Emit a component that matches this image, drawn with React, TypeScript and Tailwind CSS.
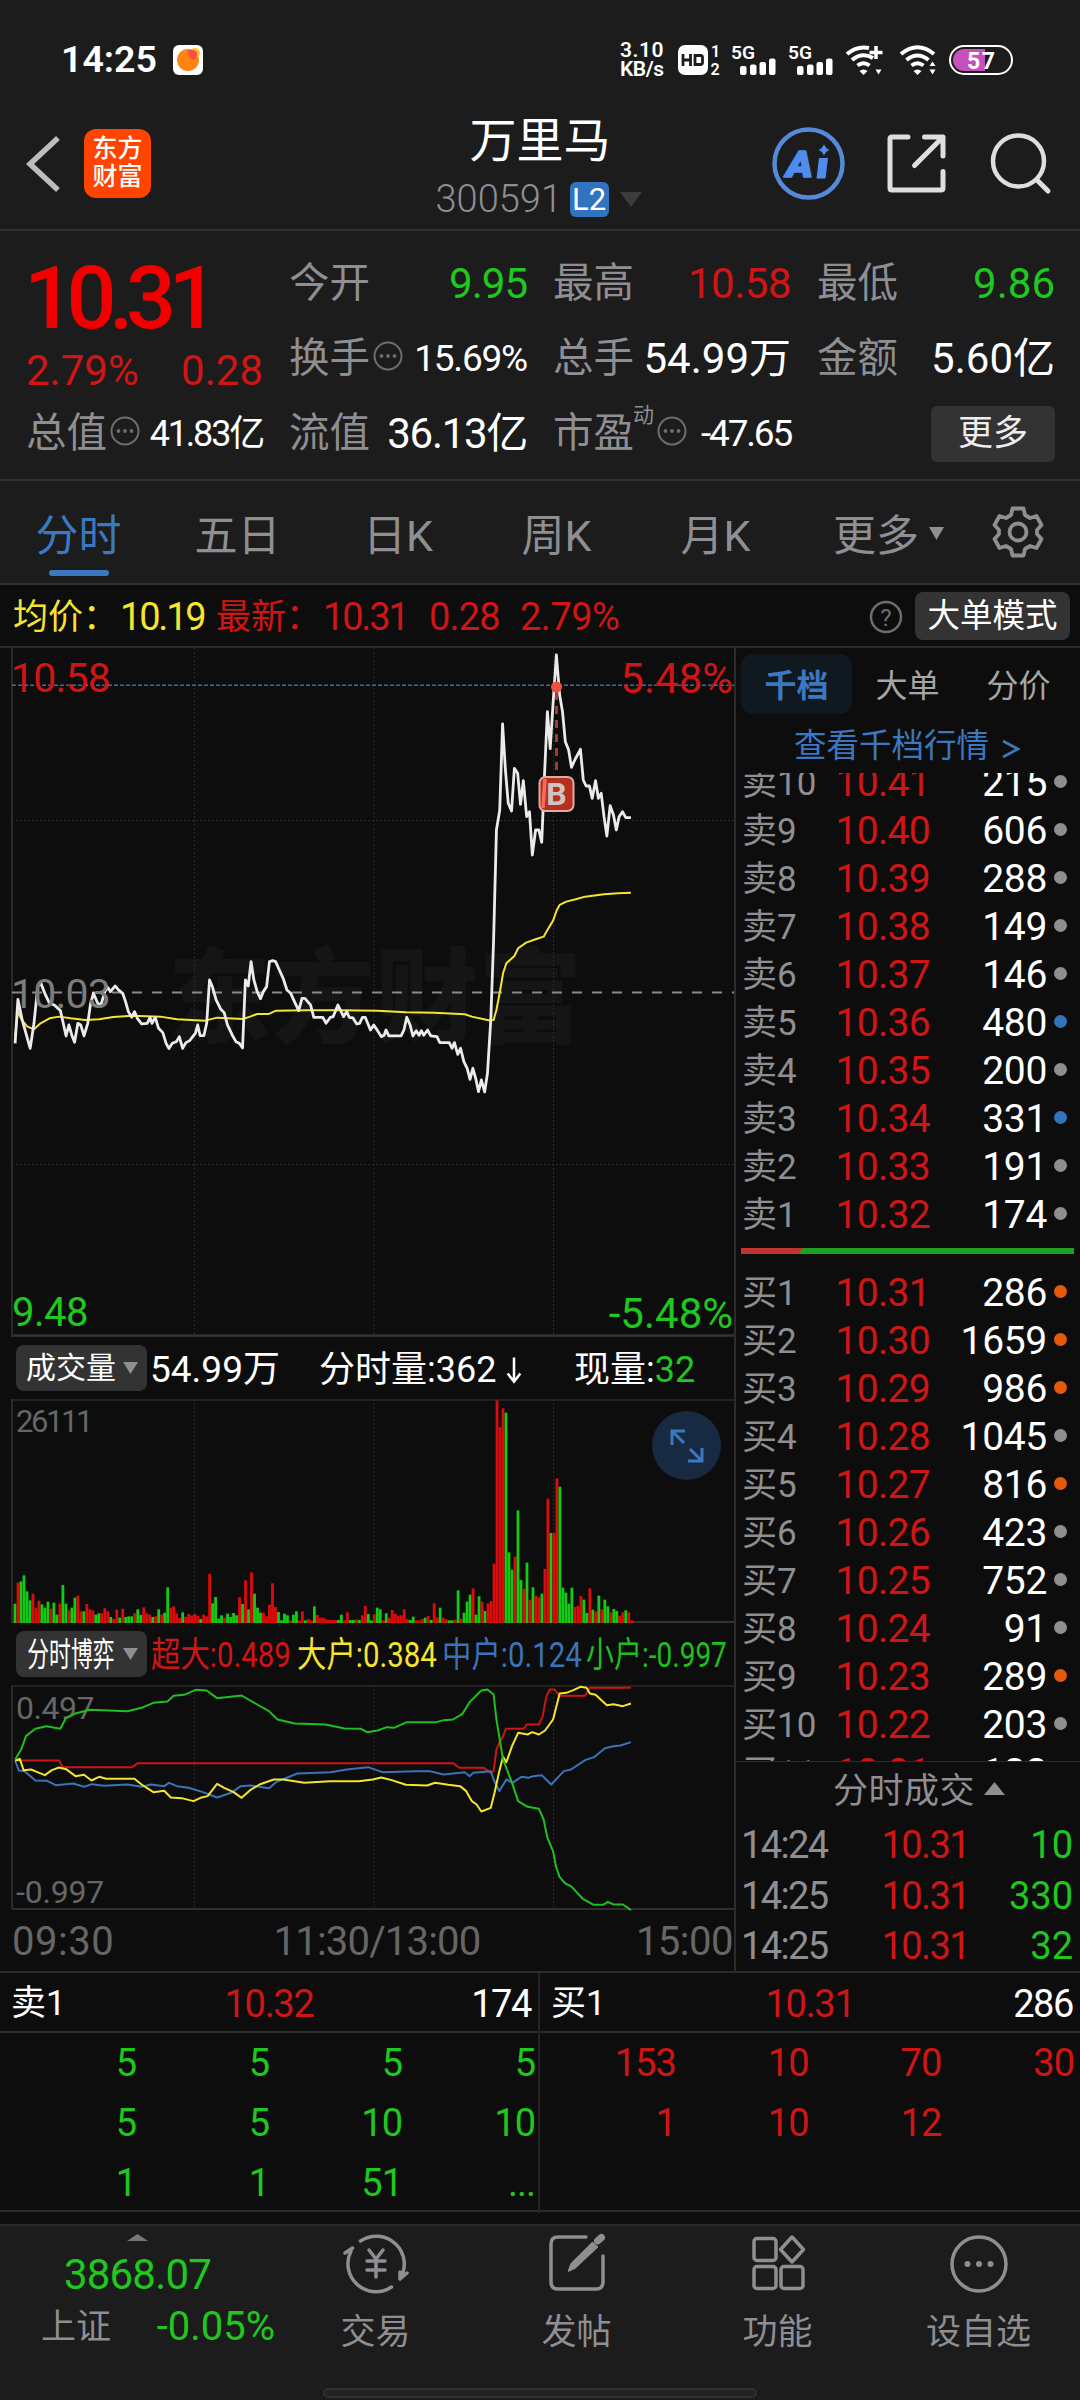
import type { ReactNode } from 'react'
import clsx from 'clsx'

type Level = { label: string; price: string; vol: string; dot: 'gray' | 'blue' | 'orange' }

const SELLS: Level[] = [
  { label: '卖10', price: '10.41', vol: '215', dot: 'gray' },
  { label: '卖9', price: '10.40', vol: '606', dot: 'gray' },
  { label: '卖8', price: '10.39', vol: '288', dot: 'gray' },
  { label: '卖7', price: '10.38', vol: '149', dot: 'gray' },
  { label: '卖6', price: '10.37', vol: '146', dot: 'gray' },
  { label: '卖5', price: '10.36', vol: '480', dot: 'blue' },
  { label: '卖4', price: '10.35', vol: '200', dot: 'gray' },
  { label: '卖3', price: '10.34', vol: '331', dot: 'blue' },
  { label: '卖2', price: '10.33', vol: '191', dot: 'gray' },
  { label: '卖1', price: '10.32', vol: '174', dot: 'gray' },
]

const BUYS: Level[] = [
  { label: '买1', price: '10.31', vol: '286', dot: 'orange' },
  { label: '买2', price: '10.30', vol: '1659', dot: 'orange' },
  { label: '买3', price: '10.29', vol: '986', dot: 'orange' },
  { label: '买4', price: '10.28', vol: '1045', dot: 'gray' },
  { label: '买5', price: '10.27', vol: '816', dot: 'orange' },
  { label: '买6', price: '10.26', vol: '423', dot: 'gray' },
  { label: '买7', price: '10.25', vol: '752', dot: 'gray' },
  { label: '买8', price: '10.24', vol: '91', dot: 'gray' },
  { label: '买9', price: '10.23', vol: '289', dot: 'orange' },
  { label: '买10', price: '10.22', vol: '203', dot: 'gray' },
  { label: '买11', price: '10.21', vol: '132', dot: 'gray' },
]

const TRADES = [
  { time: '14:24', price: '10.31', vol: '10' },
  { time: '14:25', price: '10.31', vol: '330' },
  { time: '14:25', price: '10.31', vol: '32' },
]

const SELL_QUEUE = ['5', '5', '5', '5', '5', '5', '10', '10', '1', '1', '51', '...']
const BUY_QUEUE = ['153', '10', '70', '30', '1', '10', '12']

// price and average lines, x 0-1568, y 0-2088
const PRICE_LINE =
  '32,1210 38,1078 47,1140 55,1180 64,1225 72,1150 80,1040 86,1028 95,1060 105,1090 115,1095 128,1112 134,1150 140,1188 146,1155 152,1185 158,1207 165,1150 171,1155 178,1188 186,1150 192,1090 198,1060 207,1090 214,1095 222,1055 228,1042 234,1055 244,1038 251,1050 260,1060 266,1085 272,1115 279,1132 285,1115 291,1135 300,1152 312,1150 318,1132 322,1150 329,1132 336,1165 345,1178 352,1210 358,1226 365,1210 374,1205 380,1190 387,1225 394,1208 402,1202 410,1187 414,1180 419,1155 424,1187 432,1187 438,1150 444,1020 450,1040 458,1080 468,1108 475,1118 482,1155 492,1185 500,1205 507,1210 514,1224 520,1020 526,1038 532,965 538,1020 545,1055 552,1076 558,1055 565,1040 571,965 578,962 584,965 592,990 600,1015 608,1050 616,1060 624,1085 633,1112 640,1075 646,1075 658,1095 665,1132 684,1132 691,1150 700,1132 706,1130 716,1095 722,1112 728,1130 735,1115 740,1132 748,1134 756,1152 762,1150 768,1132 774,1132 785,1170 792,1155 800,1172 808,1190 814,1186 818,1170 824,1188 850,1188 856,1170 862,1132 869,1155 875,1188 882,1172 888,1186 893,1172 898,1186 906,1170 913,1188 926,1190 932,1208 952,1208 958,1225 963,1208 970,1243 976,1225 983,1265 990,1285 996,1318 1002,1285 1008,1315 1014,1355 1020,1320 1027,1356 1033,1300 1040,1140 1046,900 1052,570 1059,510 1065,252 1071,390 1077,490 1084,513 1090,385 1097,400 1103,493 1109,422 1116,530 1122,515 1128,645 1135,570 1142,570 1148,607 1154,400 1160,215 1166,326 1172,190 1179,45 1186,165 1192,215 1198,305 1205,330 1211,382 1218,360 1230,328 1236,420 1242,438 1249,438 1255,475 1262,422 1268,475 1274,460 1280,530 1286,588 1293,497 1300,525 1306,570 1312,530 1319,515 1326,533 1337,533'
const AVG_LINE =
  '32,1190 38,1115 46,1140 58,1160 72,1168 86,1150 105,1135 125,1130 150,1135 180,1140 210,1138 240,1131 280,1127 340,1130 375,1138 435,1142 460,1133 515,1137 530,1130 545,1122 570,1122 585,1112 650,1111 720,1111 800,1112 860,1117 920,1118 985,1123 1000,1130 1035,1141 1046,1140 1052,1110 1060,1050 1066,1000 1073,970 1090,948 1098,925 1115,908 1135,898 1152,890 1160,870 1172,842 1180,810 1186,795 1200,785 1220,778 1240,770 1280,763 1310,760 1337,758'

const GAME_LINES = [
  {
    color: '#cc1414',
    points:
      '32,423 125,423 133,443 280,443 292,431 960,431 973,445 1025,445 1040,460 1046,455 1052,390 1060,365 1066,350 1072,328 1110,328 1116,315 1142,315 1150,290 1158,230 1165,210 1175,210 1186,229 1240,229 1250,205 1337,205',
  },
  {
    color: '#3b73b9',
    points:
      '32,423 40,453 52,455 75,483 100,484 118,497 155,492 178,502 195,494 220,499 270,495 300,502 320,495 348,500 358,490 375,500 400,505 430,518 460,534 490,520 510,500 530,498 555,503 570,506 585,488 630,462 700,458 735,450 780,443 810,458 880,455 910,455 940,465 985,458 995,470 1003,460 1040,455 1046,480 1058,515 1073,480 1086,490 1105,472 1120,475 1130,470 1148,467 1168,495 1195,455 1210,450 1240,422 1260,412 1282,386 1300,380 1315,378 1337,368',
  },
  {
    color: '#f5e531',
    points:
      '32,423 42,418 50,452 66,450 74,455 95,467 110,452 125,444 140,449 160,470 178,466 194,483 210,472 225,478 285,478 300,495 325,518 348,514 362,534 385,536 410,545 425,535 440,530 460,493 475,505 495,518 512,535 530,512 550,495 580,480 600,480 645,490 700,485 760,485 790,480 808,474 830,482 860,496 905,498 922,490 950,496 975,500 988,515 1000,545 1010,555 1020,576 1040,565 1048,520 1058,455 1066,412 1073,428 1085,380 1098,340 1118,345 1128,338 1142,345 1155,333 1172,300 1186,222 1200,220 1215,212 1230,202 1243,205 1250,222 1262,226 1286,257 1300,254 1320,260 1337,252',
  },
  {
    color: '#1fbf1f',
    points:
      '32,420 45,390 55,350 75,328 98,320 128,328 140,295 158,283 190,271 270,275 300,265 325,250 355,246 368,229 390,226 415,211 438,213 460,236 512,228 545,255 570,275 588,300 625,312 690,315 730,327 765,328 778,338 800,333 820,323 835,325 862,308 925,308 940,302 960,300 980,283 995,248 1020,213 1033,210 1046,225 1052,300 1066,420 1085,490 1098,545 1118,562 1142,568 1152,600 1160,655 1172,695 1178,740 1186,773 1198,792 1210,800 1235,838 1258,856 1278,856 1288,847 1300,855 1320,855 1337,872',
  },
]

// one entry per minute: r = up, g = down, number = bar height in thirds of a pixel
const VOLUME =
  'g58 r121 g125 g143 g95 g68 r88 r46 r67 g56 g46 g64 r43 g61 g25 r58 g114 g58 r38 g46 g76 r82 r35 g35 r57 r41 r38 g25 g29 r29 r44 r35 g18 r12 r40 g16 r43 g18 g20 g20 r29 g41 g24 r47 r29 r25 g18 r20 g41 r25 g31 g107 r46 r50 r28 r15 g32 r18 r27 r23 r27 r22 g12 r25 r20 r147 g59 g78 g13 g23 r16 g28 g18 g30 g23 r77 g57 r128 g41 r152 g88 g46 g31 r31 r20 r55 r119 r48 g33 g8 g28 g23 r8 g25 g35 r8 r35 g8 r12 r8 g50 r24 r16 r16 r11 r9 r9 r9 g9 g25 r8 r32 g9 g9 r11 g9 r23 r51 g27 g8 r26 g46 g41 r8 g29 r15 r39 r27 r22 r23 r41 r12 g9 g19 r8 r8 r12 g16 r21 g9 r59 r16 g46 r16 r11 g8 g8 r10 g98 r13 g31 g64 g85 r104 g25 g80 r64 g36 r59 r66 r178 r668 r588 r644 g631 g212 g160 r199 g338 g129 r103 g181 r70 g107 r82 r77 g88 r162 r373 g270 r270 r434 g409 g106 g91 g58 g106 r48 r52 r81 g70 g30 r104 g40 r35 g82 r41 g70 g50 r32 g42 g36 r22 r32 g38 r32 r8'
    .split(' ')
    .map((s) => ({ up: s[0] === 'r', h: Number(s.slice(1)) / 3 }))

const GRID_X = [194.5, 374, 553.5]

function Triangle({ className, up }: { className: string; up?: boolean }) {
  return (
    <svg viewBox="0 0 10 10" preserveAspectRatio="none" className={className} fill="currentColor">
      <path d={up ? 'M0 10L5 0L10 10Z' : 'M0 0H10L5 10Z'} />
    </svg>
  )
}

function InfoDot({ className }: { className?: string }) {
  return (
    <svg viewBox="0 0 30 30" className={clsx('mb-[5px] h-[30px] w-[30px] shrink-0 text-[#6d6d70]', className)}>
      <circle cx="15" cy="15" r="13.5" fill="none" stroke="currentColor" strokeWidth="2" />
      <g fill="currentColor">
        <circle cx="8.5" cy="15" r="1.9" />
        <circle cx="15" cy="15" r="1.9" />
        <circle cx="21.5" cy="15" r="1.9" />
      </g>
    </svg>
  )
}

function Signal() {
  return (
    <svg viewBox="0 0 46 32" className="h-8 w-[46px] overflow-visible text-white" fill="currentColor">
      <text x="0" y="15" fontSize="19" fontWeight="600" textLength="24" lengthAdjust="spacingAndGlyphs">
        5G
      </text>
      <rect x="9" y="22" width="6.5" height="9" rx="2" />
      <rect x="19" y="20.5" width="6.5" height="10.5" rx="2" />
      <rect x="28.5" y="18" width="6.5" height="13" rx="2" />
      <rect x="38" y="14.5" width="6.5" height="16.5" rx="2" />
    </svg>
  )
}

function Wifi({ plus }: { plus?: boolean }) {
  return (
    <svg viewBox="0 0 38 32" className="h-8 w-[38px] text-white" fill="none" stroke="currentColor">
      <path d={plus ? 'M2 10Q12 1.500 24 4' : 'M2 10Q18.500 -3.500 35 10'} strokeWidth="4" />
      <path d={plus ? 'M7 16Q17 7.500 28 14' : 'M7.500 16Q18.500 7 29.500 16'} strokeWidth="4" />
      <path d="M12.500 21.500Q18.500 17 24.500 21.500" strokeWidth="4" />
      <path d="M14.500 27Q18.500 24 22.500 27L18.500 31Z" fill="currentColor" stroke="none" />
      {plus && <path d="M31 2V15M24.500 8.500H37.500" strokeWidth="3.500" />}
      {!plus && <path d="M30.500 22L33.500 17.500L36.500 22Z" fill="currentColor" stroke="none" />}
      <path d="M30.500 25.500H36.500L33.500 30.500Z" fill="currentColor" stroke="none" />
    </svg>
  )
}

function StatusBar() {
  return (
    <div className="flex h-[120px] items-center pl-[61px] pr-[67px] text-white">
      <span className="w-[100px] text-[37.5px] font-semibold leading-none">14:25</span>
      <svg viewBox="0 0 30 30" className="ml-3 h-[30px] w-[30px]">
        <rect width="30" height="30" rx="6" fill="#fff" />
        <circle cx="15" cy="15" r="11" fill="#ff8412" />
        <circle cx="22" cy="8" r="5" fill="#ffc61a" />
        <path d="M15 5q6-1 9 2q1 7-4 8q-5-2-5-10z" fill="#ff4f3a" />
      </svg>
      <div className="ml-auto flex items-center">
        <div className="w-[46px] text-[21px] font-semibold leading-[19px]">
          <div className="tracking-[0.5px]">3.10</div>
          <div className="tracking-[-0.5px]">KB/s</div>
        </div>
        <svg viewBox="0 0 44 32" className="ml-[12px] h-8 w-11 overflow-visible" fill="#fff">
          <rect y="1" width="30" height="30" rx="7" />
          <path d="M5 10V22M5 16H12.500M12.500 10V22M17 11.500H22.500Q24.500 11.500 24.500 13.500V18.500Q24.500 20.500 22.500 20.500H17Z" fill="none" stroke="#1c1c1c" strokeWidth="2.800" />
          <text x="33" y="13" fontSize="16" fontWeight="600">1</text>
          <text x="32.5" y="30.5" fontSize="16" fontWeight="600">2</text>
        </svg>
        <div className="ml-[9px]"><Signal /></div>
        <div className="ml-[11px]"><Signal /></div>
        <div className="ml-[11px]"><Wifi plus /></div>
        <div className="ml-[16px]"><Wifi /></div>
        <svg viewBox="0 0 64 30" className="ml-[12px] h-[30px] w-16">
          <rect x="1" y="1" width="62" height="28" rx="14" fill="#1c1c1c" stroke="#fff" strokeWidth="2" />
          <path d="M36 4V26H15A11 11 0 0 1 15 4Z" fill="#c850bd" />
          <text x="18" y="23.5" fontSize="23" fontWeight="700" fill="#fff" textLength="28">57</text>
        </svg>
      </div>
    </div>
  )
}

function Header() {
  return (
    <div className="grid h-[111px] grid-cols-[320px_1fr_320px] border-b-2 border-[#303030]">
      <div className="flex items-center pb-[22px] pl-[25px]">
        <svg viewBox="0 0 36 58" className="h-[58px] w-9" fill="none" stroke="#bdbdbd" strokeWidth="5.500">
          <path d="M33 3L5 29L33 55" />
        </svg>
        <div className="ml-[23px] flex h-[69px] w-[67px] flex-col items-center justify-center rounded-xl bg-[#ff4400] pb-[2px] text-[25px] font-medium leading-[28px] text-white">
          <div>东方</div>
          <div>财富</div>
        </div>
      </div>
      <div className="flex flex-col items-center">
        <div className="-mt-[4px] text-[47px] leading-[50px] text-white">万里马</div>
        <div className="mr-[3px] mt-[13px] flex h-10 items-center">
          <span className="w-[134px] text-[38px] font-light leading-none text-[#8e8e93]">300591</span>
          <span className="flex h-[35px] w-[39px] items-center justify-center rounded-md bg-[#3173be] text-[31px] leading-none text-white">
            L2
          </span>
          <Triangle className="ml-[11px] h-[15px] w-[22px] text-[#3b3b3b]" />
        </div>
      </div>
      <svg viewBox="0 0 320 108" className="h-[108px] w-80" fill="none" stroke="#dedede" strokeWidth="5" strokeLinecap="round" strokeLinejoin="round">
        <circle cx="48.5" cy="43.5" r="34" stroke="#558ad8" strokeWidth="4.500" />
        <g fill="#4e8cee" stroke="none">
          <text x="26" y="57" fontSize="37" fontWeight="900" fontStyle="italic" textLength="27" lengthAdjust="spacingAndGlyphs" stroke="#4e8cee" strokeWidth="1.500">
            A
          </text>
          <path d="M59 38H68L65.500 58.500H56.500Z" />
          <path d="M64 24Q65.500 28.500 69.500 30Q65.500 31.500 64 35.500Q62.500 31.500 58.500 30Q62.500 28.500 64 24Z" />
        </g>
        <path d="M148 17H132Q130 17 130 19V68Q130 70 132 70H181Q183 70 183 68V51.500M164.500 17H183V36M181 19L154.500 45.500" />
        <circle cx="258.5" cy="41" r="25.5" strokeWidth="4.500" />
        <path d="M277 60L288 71" />
      </svg>
    </div>
  )
}

function Metric({ label, value, info, sup, className }: { label: string; value: string; info?: boolean; sup?: string; className: string }) {
  return (
    <div className="flex h-[75px] items-center whitespace-nowrap leading-none">
      <span className="text-[40.5px] text-[#8e8e93]">{label}</span>
      {sup && <span className="-ml-px mb-9 text-[21px] text-[#8e8e93]">{sup}</span>}
      {info && <InfoDot className={sup ? 'ml-[3px]' : 'ml-[3px]'} />}
      <span className={clsx('ml-auto', className)}>{value}</span>
    </div>
  )
}

function Quote() {
  return (
    <div className="grid h-[250px] grid-cols-[237px_238px_238px_238px] gap-x-[26px] border-b-2 border-[#303030] pl-[26px] pt-[15px]">
      <div className="flex flex-col">
        <div className="-ml-[2px] h-[100px] text-[88px] font-medium leading-[104px] tracking-[-7.5px] text-[#f20000]">10.31</div>
        <div className="flex h-[50px] items-center justify-between text-[42px] leading-none text-[#cf1515]">
          <span>2.79%</span>
          <span>0.28</span>
        </div>
        <Metric label="总值" info value="41.83亿" className="text-[36px] tracking-[-2.2px] text-white" />
      </div>
      <div>
        <Metric label="今开" value="9.95" className="text-[42px] tracking-[-1px] text-[#1fc81f]" />
        <Metric label="换手" info value="15.69%" className="text-[37px] tracking-[-1.2px] text-white" />
        <Metric label="流值" value="36.13亿" className="text-[42px] tracking-[-1.3px] text-white" />
      </div>
      <div>
        <Metric label="最高" value="10.58" className="text-[42px] tracking-[-0.5px] text-[#cf1515]" />
        <Metric label="总手" value="54.99万" className="text-[42px] text-white" />
        <Metric label="市盈" sup="动" info value="-47.65" className="text-[37px] tracking-[-2.2px] text-white" />
      </div>
      <div>
        <Metric label="最低" value="9.86" className="text-[42px] text-[#1fc81f]" />
        <Metric label="金额" value="5.60亿" className="text-[42px] text-white" />
        <div className="flex h-[75px] items-center justify-end">
          <button className="h-[56px] w-[124px] rounded-md bg-[#333] text-[35px] leading-none text-[#eee]">更多</button>
        </div>
      </div>
    </div>
  )
}

function PeriodTabs() {
  return (
    <div className="flex h-[104px] border-b-2 border-[#303030] text-[43px] leading-none text-[#8e8e93]">
      <div className="flex w-[157px] flex-col items-center pt-[34px] text-[#3b78c0]">
        <span>分时</span>
        <span className="mt-[12px] h-[6px] w-[60px] rounded-full bg-[#3b78c0]" />
      </div>
      <div className="w-[161px] pt-[34px] text-center">五日</div>
      <div className="w-[160px] pt-[34px] text-center">日K</div>
      <div className="w-[157px] pt-[34px] text-center">周K</div>
      <div className="w-[161px] pt-[34px] text-center">月K</div>
      <div className="flex w-[182px] pl-[37px] pt-[34px]">
        更多
        <Triangle className="ml-[10px] mt-[12px] h-[13px] w-[15px]" />
      </div>
      <svg viewBox="0 0 54 54" className="ml-[13px] mt-[24px] h-[54px] w-[54px]" fill="none" stroke="currentColor" strokeWidth="3.800" strokeLinejoin="round">
        <path d="M21.500 3.500H32.500L34 10L39 13L45.500 11L50.500 20L46 25V29L50.500 34L45.500 43L39 41L34 44L32.500 50.500H21.500L20 44L15 41L8.500 43L3.500 34L8 29V25L3.500 20L8.500 11L15 13L20 10Z" />
        <circle cx="27" cy="27" r="8.5" />
      </svg>
    </div>
  )
}

function AverageBar() {
  return (
    <div className="flex h-[63px] items-center border-b-2 border-[#2c2c2c] pl-[13px] pr-[10px] pt-[3px] text-[38px] leading-none tracking-[-2.2px]">
      <span className="w-[107px] text-[35px] tracking-normal text-[#f5e531]">均价：</span>
      <span className="w-[96px] text-[#f5e531]">10.19</span>
      <span className="w-[107px] text-[35px] tracking-normal text-[#cf1515]">最新：</span>
      <span className="w-[106px] text-[#cf1515]">10.31</span>
      <span className="w-[91px] tracking-[-0.8px] text-[#cf1515]">0.28</span>
      <span className="tracking-[-0.5px] text-[#cf1515]">2.79%</span>
      <svg viewBox="0 0 34 34" className="ml-auto h-[34px] w-[34px] text-[#6d6d70]">
        <circle cx="17" cy="17" r="15" fill="none" stroke="currentColor" strokeWidth="2.500" />
        <text x="17" y="25.5" fontSize="24" textAnchor="middle" fill="currentColor" stroke="none" letterSpacing="0">?</text>
      </svg>
      <button className="mb-[2px] ml-3 h-12 w-[155px] rounded-lg bg-[#333] text-[32.5px] leading-none tracking-normal text-white">大单模式</button>
    </div>
  )
}

function Grid({ height }: { height: number }) {
  return (
    <g stroke="#2a2a2a" strokeDasharray="2 2">
      {GRID_X.map((x) => (
        <path key={x} d={`M${x} 0V${height}`} />
      ))}
    </g>
  )
}

function PriceChart() {
  return (
    <div className="relative h-[689px] leading-none">
      <svg viewBox="0 0 734 689" className="absolute inset-0 h-[689px] w-[734px]">
        <text x="168" y="387" fontSize="103" fontWeight="900" fill="#151515" textLength="414">东方财富</text>
        <Grid height={687} />
        <path d="M12 172.500H734M12 516.500H734" stroke="#2a2a2a" strokeDasharray="2 2" />
        <path d="M12 0V689" stroke="#2a2a2a" strokeWidth="2" />
        <path d="M12 687.500H734" stroke="#333" strokeWidth="2.500" />
        <path d="M12 37.300H734" stroke="#3a6ca8" strokeWidth="1.500" strokeDasharray="4 2" />
        <path d="M12 344.500H734" stroke="#8a8a8a" strokeWidth="2" strokeDasharray="10 10" />
        <g transform="translate(0 -8) scale(0.4719 0.3333)" fill="none" strokeLinejoin="round">
          <polyline points={AVG_LINE} stroke="#f5e531" strokeWidth="2" vectorEffect="non-scaling-stroke" />
          <polyline points={PRICE_LINE} stroke="#ebebeb" strokeWidth="2.800" vectorEffect="non-scaling-stroke" />
        </g>
        <path d="M556.500 44V128" stroke="#a83a2c" strokeWidth="3" strokeDasharray="8 6" />
        <circle cx="556.5" cy="39" r="5.5" fill="#ee5044" />
        <rect x="539.5" y="129" width="34" height="34" rx="6" fill="#b63022" stroke="#e0a9a2" strokeWidth="2" />
        <path d="M543 160L545 131" stroke="#ff6a55" strokeWidth="3.500" />
        <text x="556.5" y="157" fontSize="32" fontWeight="700" textAnchor="middle" fill="#cfc4c2">B</text>
      </svg>
      <span className="absolute left-[11px] top-[10px] text-[41px] tracking-[-0.8px] text-[#cf1515]">10.58</span>
      <span className="absolute right-[1px] top-[10px] text-[42px] text-[#cf1515]">5.48%</span>
      <span className="absolute left-[11px] top-[326px] text-[41px] tracking-[-0.8px] text-[#7c7c7c]">10.03</span>
      <span className="absolute left-[12px] top-[645px] text-[40px] tracking-[-0.5px] text-[#1fc81f]">9.48</span>
      <span className="absolute right-[1px] top-[645px] text-[42px] text-[#1fc81f]">-5.48%</span>
    </div>
  )
}

function Picker({ children }: { children: ReactNode }) {
  return (
    <button className="flex h-[46px] w-[131px] shrink-0 items-center rounded-lg bg-[#333] pl-[10px] text-white">
      {children}
      <Triangle className="ml-auto mr-[9px] h-3 w-[15px] text-[#8e8e93]" />
    </button>
  )
}

function VolumePanel() {
  return (
    <>
      <div className="flex h-[62px] items-center whitespace-nowrap pl-4 text-[37px] leading-none text-white">
        <Picker>
          <span className="text-[30px]">成交量</span>
        </Picker>
        <span className="ml-[3px] mt-[3px] w-[169px] text-[37px]">54.99万</span>
        <span className="mt-[3px] flex w-[255px] items-center text-[36px]">
          分时量:362
          <svg viewBox="0 0 20 30" className="ml-[9px] h-[28px] w-[18px]" fill="none" stroke="currentColor" strokeWidth="2.800">
            <path d="M10 1V28M3 19L10 28L17 19" />
          </svg>
        </span>
        <span className="mt-[3px] text-[36px]">
          现量:<span className="text-[#1fc81f]">32</span>
        </span>
      </div>
      <div className="relative h-[224px] leading-none">
        <svg viewBox="0 0 734 224" className="absolute inset-0 h-[224px] w-[734px]">
          <Grid height={223} />
          <path d="M12 0V224" stroke="#2a2a2a" strokeWidth="2" />
          <path d="M12 1H734" stroke="#2a2a2a" strokeWidth="1.500" />
          <path d="M12 223H734" stroke="#333" strokeWidth="2" />
          {VOLUME.map((bar, i) => (
            <rect
              key={i}
              x={13.6 + i * 2.994}
              y={224 - bar.h}
              width={2.8}
              height={bar.h}
              fill={bar.up ? '#df0b0b' : '#12cc12'}
            />
          ))}
        </svg>
        <span className="absolute left-4 top-[7px] text-[31px] tracking-[-2.4px] text-[#666]">26111</span>
        <button className="absolute left-[652px] top-[12px] flex h-[69px] w-[69px] items-center justify-center rounded-full bg-[#172a41]">
          <svg viewBox="0 0 34 34" className="h-[34px] w-[34px]" fill="none" stroke="#3b78c0" strokeWidth="3">
            <path d="M2 16V2H15M2 2L14 14M32 19V32H18M32 32L20 20" />
          </svg>
        </button>
      </div>
    </>
  )
}

// labels in this row are drawn narrower than their natural width
function Squeezed({ children, className }: { children: ReactNode; className: string }) {
  return <span className={clsx('inline-block origin-left whitespace-nowrap', className)}>{children}</span>
}

function GamePanel() {
  return (
    <>
      <div className="flex h-[62px] items-center pl-4 text-[35px] leading-none">
        <Picker>
          <span className="w-[88px]">
            <Squeezed className="w-[136px] scale-x-[.66] text-[33px]">分时博弈</Squeezed>
          </span>
        </Picker>
        <div className="ml-[4px] mt-[2px] w-[146px] text-[#cf1515]"><Squeezed className="w-[144px] scale-x-[.84]">超大:0.489</Squeezed></div>
        <div className="mt-[2px] w-[145px] text-[#f5e531]"><Squeezed className="w-[144px] scale-x-[.84]">大户:0.384</Squeezed></div>
        <div className="mt-[2px] w-[144px] text-[#3b73b9]"><Squeezed className="w-[144px] scale-x-[.84]">中户:0.124</Squeezed></div>
        <div className="mt-[2px] w-[140px] text-[#1fbf1f]"><Squeezed className="w-[144px] scale-x-[.8]">小户:-0.997</Squeezed></div>
      </div>
      <div className="relative h-[226px] leading-none">
        <svg viewBox="0 0 734 226" className="absolute inset-0 h-[226px] w-[734px]">
          <Grid height={224} />
          <path d="M12 1V224" stroke="#2a2a2a" strokeWidth="2" />
          <path d="M12 1H734" stroke="#2a2a2a" strokeWidth="1.500" />
          <path d="M12 224H734" stroke="#2e2e2e" strokeWidth="2" />
        </svg>
        <span className="absolute left-4 top-[7px] text-[32px] tracking-[-0.5px] text-[#666]">0.497</span>
        <span className="absolute left-4 top-[191px] text-[32px] tracking-[-0.2px] text-[#666]">-0.997</span>
        <svg viewBox="0 0 734 226" className="absolute inset-0 h-[226px] w-[734px]">
          <g transform="translate(0 -65.500) scale(0.4719 0.3333)" fill="none" strokeLinejoin="round">
            {GAME_LINES.map((line) => (
              <polyline key={line.color} points={line.points} stroke={line.color} strokeWidth="2" vectorEffect="non-scaling-stroke" />
            ))}
          </g>
        </svg>
      </div>
      <div className="flex h-[62px] items-center justify-between pl-[12px] pr-px text-[40px] leading-none text-[#666]">
        <span className="tracking-[0.5px]">09:30</span>
        <span className="-mr-1 tracking-[-0.8px]">11:30/13:00</span>
        <span className="tracking-[-0.5px]">15:00</span>
      </div>
    </>
  )
}

function LevelRow({ level }: { level: Level }) {
  return (
    <div className="flex h-12 shrink-0 items-center text-[39px] leading-none">
      <span className="w-[84px] text-[35px] text-[#8e8e93]">{level.label}</span>
      <span className="w-[104px] text-right tracking-[-0.7px] text-[#cf1515]">{level.price}</span>
      <span className="w-[117px] text-right tracking-[-0.3px] text-white">{level.vol}</span>
      <span
        className={clsx(
          'mb-[3px] ml-[7px] h-[13px] w-[13px] rounded-full',
          level.dot === 'gray' && 'bg-[#8e8e93]',
          level.dot === 'blue' && 'bg-[#3173be]',
          level.dot === 'orange' && 'bg-[#e8590c]',
        )}
      />
    </div>
  )
}

function OrderBook() {
  return (
    <div className="flex w-[346px] flex-col border-l-2 border-[#2c2c2c]">
      <div className="mt-[6px] flex h-[60px] shrink-0 pl-[5px] text-[32px] leading-none text-[#a6a6a6]">
        <div className="flex w-[111px] items-center justify-center rounded-xl bg-[#101820] pt-[3px] font-bold text-[#3b78c0]">千档</div>
        <div className="flex w-[111px] items-center justify-center pt-[3px]">大单</div>
        <div className="flex w-[111px] items-center justify-center pt-[3px]">分价</div>
      </div>
      <div className="flex h-[59px] shrink-0 items-center pl-[58px] pt-[6px] text-[32.5px] leading-none text-[#3b78c0]">
        查看千档行情
        <svg viewBox="0 0 18 20" className="ml-[13px] mt-1 h-5 w-[18px]" fill="none" stroke="currentColor" strokeWidth="2.600">
          <path d="M1 2L16 10L1 18" />
        </svg>
      </div>
      <div className="flex h-[466px] shrink-0 flex-col justify-end overflow-hidden pl-[6px]">
        {SELLS.map((l) => (
          <LevelRow key={l.label} level={l} />
        ))}
      </div>
      <div className="mt-[9px] flex h-[6px] shrink-0 pl-[5px]">
        <svg viewBox="0 0 333 6" className="h-[6px] w-[333px]">
          <rect width="333" height="6" fill="#1f9f1f" />
          <path d="M0 0H62L57 6H0Z" fill="#bf3330" />
        </svg>
      </div>
      <div className="mt-[15px] h-[492px] shrink-0 overflow-hidden pl-[6px]">
        {BUYS.map((l) => (
          <LevelRow key={l.label} level={l} />
        ))}
      </div>
      <div className="flex h-[59px] shrink-0 items-center justify-center border-t border-[#2c2c2c] pl-[22px] text-[35px] leading-none tracking-[0.5px] text-[#8e8e93]">
        分时成交
        <Triangle up className="ml-[9px] mt-[-6px] h-[13px] w-[21px]" />
      </div>
      {TRADES.map((t, i) => (
        <div key={i} className="flex h-[50.5px] shrink-0 items-center pl-[5px] text-[38px] leading-none tracking-[-1.6px]">
          <span className="w-[125px] text-[#8e8e93]">{t.time}</span>
          <span className="w-[103px] text-right text-[#cf1515]">{t.price}</span>
          <span className="w-[104px] text-right tracking-normal text-[#1fc81f]">{t.vol}</span>
        </div>
      ))}
    </div>
  )
}

function Queue({ label, price, vol, cells, className }: { label: string; price: string; vol: string; cells: string[]; className: string }) {
  return (
    <div className="text-[38px] leading-none">
      <div className="relative flex h-[60px] items-center justify-center border-b-2 border-[#2c2c2c] pt-[3px] text-[#cf1515]">
        <span className="absolute left-[11px] text-[35px] text-white">{label}</span>
        <span className="tracking-[-1.3px]">{price}</span>
        <span className="absolute right-[7px] tracking-[-1.4px] text-white">{vol}</span>
      </div>
      <div className={clsx('grid grid-cols-4 text-right tracking-[-1px]', className)}>
        {cells.map((c, i) => (
          <span key={i} className="h-[60px] leading-[61px]">{c}</span>
        ))}
      </div>
    </div>
  )
}

function FooterItem({ label, children }: { label: string; children: ReactNode }) {
  return (
    <div className="flex w-[201px] flex-col items-center pt-[5px] text-[35px] leading-none text-[#8e8e93]">
      <svg viewBox="0 0 66 66" className="h-[66px] w-[66px]" fill="none" stroke="currentColor" strokeWidth="3.500" strokeLinecap="round" strokeLinejoin="round">
        {children}
      </svg>
      <span className="mt-[18px]">{label}</span>
    </div>
  )
}

function Footer() {
  return (
    <div className="h-[176px] border-t-2 border-[#2a2a2a] bg-[#1c1c1c]">
      <div className="flex h-[162px]">
        <div className="flex w-[275px] flex-col items-center pt-[8px] leading-none">
          <Triangle up className="h-[7px] w-[21px] text-[#77777a]" />
          <div className="mt-[13px] text-[42px] tracking-[-0.8px] text-[#1fc81f]">3868.07</div>
          <div className="mt-[11px] flex w-full items-center justify-between pl-[41px] text-[40px] text-[#1fc81f]">
            <span className="text-[35px] text-[#8e8e93]">上证</span>
            <span>-0.05%</span>
          </div>
        </div>
        <FooterItem label="交易">
          <path d="M17.500 10A28 28 0 0 1 57 48M48.500 56A28 28 0 0 1 8 20M2 22L9.500 17M57 48L64 42M57 48V41" />
          <path d="M26 19L33 28L40 19M33 28V46M24 30H42M24 39H42" />
        </FooterItem>
        <FooterItem label="发帖">
          <path d="M42 6H14Q7 6 7 13V51Q7 58 14 58H52Q59 58 59 51V25" />
          <path d="M24.500 40L27 33L48.500 11.500L53.500 16L31 37Z" fill="currentColor" strokeWidth="1.500" />
          <path d="M53.500 10L57.500 6.500" strokeWidth="7" />
        </FooterItem>
        <FooterItem label="功能">
          <rect x="9" y="7.5" width="22" height="22" rx="3" />
          <rect x="9" y="35.5" width="22" height="22" rx="3" />
          <rect x="36" y="35.5" width="22" height="22" rx="3" />
          <path d="M47 6L58.500 18.500L47 31L35.500 18.500Z" />
        </FooterItem>
        <FooterItem label="设自选">
          <circle cx="33" cy="33" r="27" />
          <g fill="currentColor" stroke="none">
            <circle cx="21.5" cy="33" r="3" />
            <circle cx="33" cy="33" r="3" />
            <circle cx="44.5" cy="33" r="3" />
          </g>
        </FooterItem>
      </div>
      <div className="mx-auto h-[10px] w-[434px] rounded-full border-2 border-[#303030] bg-[#232323]" />
    </div>
  )
}

export default function App() {
  return (
    <div className="flex h-[2400px] w-[1080px] flex-col overflow-hidden bg-[#0d0d0d] font-[Roboto,'Noto_Sans_CJK_SC',sans-serif]">
      <div className="bg-[#1c1c1c]">
        <StatusBar />
        <Header />
        <Quote />
        <PeriodTabs />
      </div>
      <AverageBar />
      <div className="flex h-[1325px] border-b-2 border-[#2c2c2c]">
        <div className="w-[734px] shrink-0">
          <PriceChart />
          <VolumePanel />
          <GamePanel />
        </div>
        <OrderBook />
      </div>
      <div className="grid h-[239px] grid-cols-2 border-b-2 border-[#2c2c2c]">
        <div className="border-r-2 border-[#232323]">
          <Queue label="卖1" price="10.32" vol="174" cells={SELL_QUEUE} className="pl-[3px] pr-[3px] text-[#1fc81f]" />
        </div>
        <Queue label="买1" price="10.31" vol="286" cells={BUY_QUEUE} className="pl-[3px] pr-[6px] text-[#cf1515]" />
      </div>
      <div className="flex-1" />
      <Footer />
    </div>
  )
}
